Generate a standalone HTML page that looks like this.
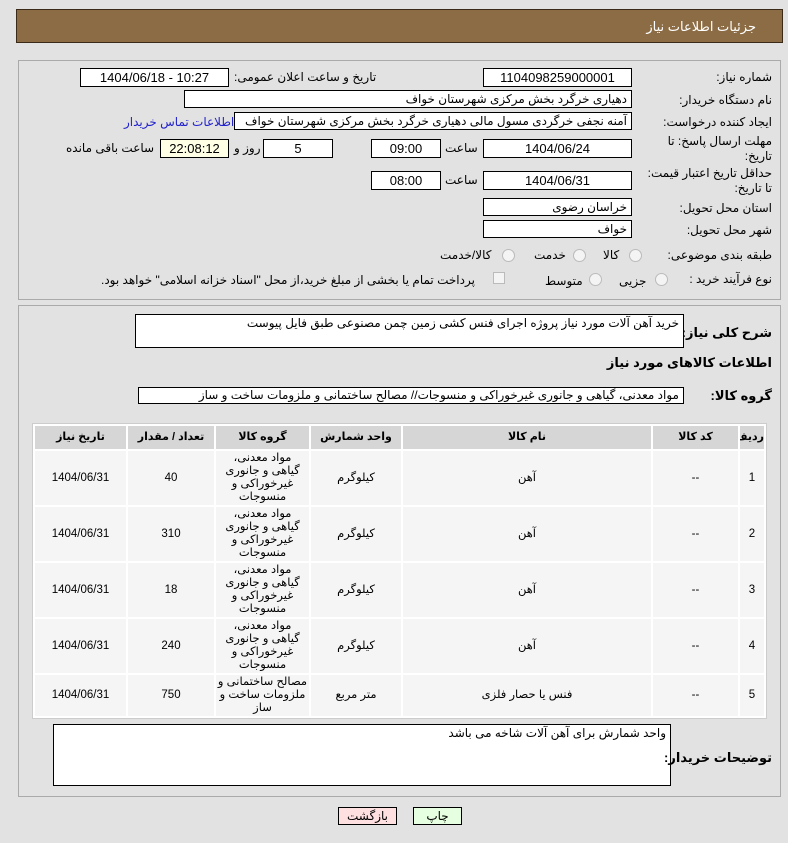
<!DOCTYPE html>
<html><head><meta charset="utf-8"><style>
body{margin:0;width:788px;height:843px;background:#e2e2e2;font-family:"Liberation Sans","DejaVu Sans",sans-serif;font-size:12px;color:#000;position:relative;overflow:hidden}
.a{position:absolute;white-space:nowrap;direction:rtl}
.r{position:absolute;white-space:nowrap;text-align:right;direction:rtl}
.box{position:absolute;background:#fff;border:1px solid #000;box-sizing:border-box;height:19px;line-height:17px;text-align:center;font-size:13px}
.tb{position:absolute;background:#fff;border:1px solid #000;box-sizing:border-box;direction:rtl;text-align:right;padding:1px 4px;font-size:12px;white-space:nowrap;overflow:hidden}
.rad{position:absolute;width:11px;height:11px;border-radius:50%;border:1px solid #bbb;background:#f4f4f4}
.b{font-weight:bold;font-size:13px}
table{position:absolute;left:32px;top:423px;width:735px;border-collapse:separate;border-spacing:2px;background:#fff;border:1px solid #ccc;direction:rtl;table-layout:fixed}
td,th{background:#f5f5f5;text-align:center;font-size:11.5px;padding:0;line-height:13px;overflow:hidden}
th{background:#d6d6d6;height:23px;font-weight:bold;font-size:11px;white-space:nowrap}
</style></head><body>
<div class="a" style="left:16px;top:9px;width:767px;height:34px;background:#8c6c44;border:1px solid #3a2a18;box-sizing:border-box"></div>
<div class="r" style="right:32px;top:19px;color:#fff;font-size:13px">جزئیات اطلاعات نیاز</div>

<div class="a" style="left:18px;top:60px;width:763px;height:240px;border:1px solid #aaa;box-sizing:border-box"></div>
<div class="r" style="right:16px;top:70px">شماره نیاز:</div>
<div class="box" style="left:483px;top:68px;width:149px">1104098259000001</div>
<div class="a" style="left:234px;top:70px">تاریخ و ساعت اعلان عمومی:</div>
<div class="box" style="left:80px;top:68px;width:149px">1404/06/18 - 10:27</div>

<div class="r" style="right:16px;top:93px">نام دستگاه خریدار:</div>
<div class="tb" style="left:184px;top:90px;width:448px;height:18px">دهیاری خرگرد بخش مرکزی شهرستان خواف</div>

<div class="r" style="right:16px;top:115px">ایجاد کننده درخواست:</div>
<div class="tb" style="left:234px;top:112px;width:398px;height:18px">آمنه نجفی خرگردی مسول مالی دهیاری خرگرد بخش مرکزی شهرستان خواف</div>
<div class="a" style="left:124px;top:115px;color:#2222cc">اطلاعات تماس خریدار</div>

<div class="r" style="right:16px;top:134px;line-height:15px">مهلت ارسال پاسخ: تا<br>تاریخ:</div>
<div class="box" style="left:483px;top:139px;width:149px">1404/06/24</div>
<div class="a" style="left:445px;top:141px">ساعت</div>
<div class="box" style="left:371px;top:139px;width:70px">09:00</div>
<div class="box" style="left:263px;top:139px;width:70px">5</div>
<div class="a" style="left:234px;top:141px">روز و</div>
<div class="box" style="left:160px;top:139px;width:69px;background:#ffffe6">22:08:12</div>
<div class="a" style="left:66px;top:141px">ساعت باقی مانده</div>

<div class="r" style="right:16px;top:166px;line-height:15px">حداقل تاریخ اعتبار قیمت:<br>تا تاریخ:</div>
<div class="box" style="left:483px;top:171px;width:149px">1404/06/31</div>
<div class="a" style="left:445px;top:173px">ساعت</div>
<div class="box" style="left:371px;top:171px;width:70px">08:00</div>

<div class="r" style="right:16px;top:201px">استان محل تحویل:</div>
<div class="tb" style="left:483px;top:198px;width:149px;height:18px">خراسان رضوی</div>
<div class="r" style="right:16px;top:223px">شهر محل تحویل:</div>
<div class="tb" style="left:483px;top:220px;width:149px;height:18px">خواف</div>

<div class="r" style="right:16px;top:248px">طبقه بندی موضوعی:</div>
<div class="rad" style="left:629px;top:249px"></div><div class="a" style="left:603px;top:248px">کالا</div>
<div class="rad" style="left:573px;top:249px"></div><div class="a" style="left:534px;top:248px">خدمت</div>
<div class="rad" style="left:502px;top:249px"></div><div class="a" style="left:440px;top:248px">کالا/خدمت</div>

<div class="r" style="right:16px;top:272px">نوع فرآیند خرید :</div>
<div class="rad" style="left:655px;top:273px"></div><div class="a" style="left:619px;top:274px">جزیی</div>
<div class="rad" style="left:589px;top:273px"></div><div class="a" style="left:545px;top:274px">متوسط</div>
<div class="a" style="left:493px;top:272px;width:10px;height:10px;border:1px solid #bbb;background:#f4f4f4"></div>
<div class="a" style="left:101px;top:273px">پرداخت تمام یا بخشی از مبلغ خرید،از محل "اسناد خزانه اسلامی" خواهد بود.</div>

<div class="a" style="left:18px;top:305px;width:763px;height:492px;border:1px solid #aaa;box-sizing:border-box"></div>
<div class="r b" style="right:16px;top:325px">شرح کلی نیاز:</div>
<div class="tb" style="left:135px;top:314px;width:549px;height:34px">خرید آهن آلات مورد نیاز پروژه اجرای فنس کشی زمین چمن مصنوعی طبق فایل پیوست</div>
<div class="r b" style="right:16px;top:355px">اطلاعات کالاهای مورد نیاز</div>
<div class="r b" style="right:16px;top:388px">گروه کالا:</div>
<div class="tb" style="left:138px;top:387px;width:546px;height:17px;line-height:14px;padding-top:0">مواد معدنی، گیاهی و جانوری غیرخوراکی و منسوجات// مصالح ساختمانی و ملزومات ساخت و ساز</div>

<table>
<tr><th style="width:24px">ردیف</th><th style="width:85px">کد کالا</th><th style="width:248px">نام کالا</th><th style="width:90px">واحد شمارش</th><th style="width:93px">گروه کالا</th><th style="width:86px">تعداد / مقدار</th><th>تاریخ نیاز</th></tr>
<tr style="height:54px"><td>1</td><td>--</td><td>آهن</td><td>کیلوگرم</td><td>مواد معدنی،<br>گیاهی و جانوری<br>غیرخوراکی و<br>منسوجات</td><td>40</td><td>1404/06/31</td></tr>
<tr style="height:54px"><td>2</td><td>--</td><td>آهن</td><td>کیلوگرم</td><td>مواد معدنی،<br>گیاهی و جانوری<br>غیرخوراکی و<br>منسوجات</td><td>310</td><td>1404/06/31</td></tr>
<tr style="height:54px"><td>3</td><td>--</td><td>آهن</td><td>کیلوگرم</td><td>مواد معدنی،<br>گیاهی و جانوری<br>غیرخوراکی و<br>منسوجات</td><td>18</td><td>1404/06/31</td></tr>
<tr style="height:54px"><td>4</td><td>--</td><td>آهن</td><td>کیلوگرم</td><td>مواد معدنی،<br>گیاهی و جانوری<br>غیرخوراکی و<br>منسوجات</td><td>240</td><td>1404/06/31</td></tr>
<tr style="height:41px"><td>5</td><td>--</td><td>فنس یا حصار فلزی</td><td>متر مربع</td><td style="white-space:nowrap">مصالح ساختمانی و<br>ملزومات ساخت و<br>ساز</td><td>750</td><td>1404/06/31</td></tr>
</table>

<div class="tb" style="left:53px;top:724px;width:618px;height:62px">واحد شمارش برای آهن آلات شاخه می باشد</div>
<div class="r b" style="right:16px;top:750px">توضیحات خریدار:</div>

<div class="box" style="left:338px;top:807px;width:59px;height:18px;background:#ffe0e0;font-size:12px">بازگشت</div>
<div class="box" style="left:413px;top:807px;width:49px;height:18px;background:#e6ffe0;font-size:12px">چاپ</div>
</body></html>
